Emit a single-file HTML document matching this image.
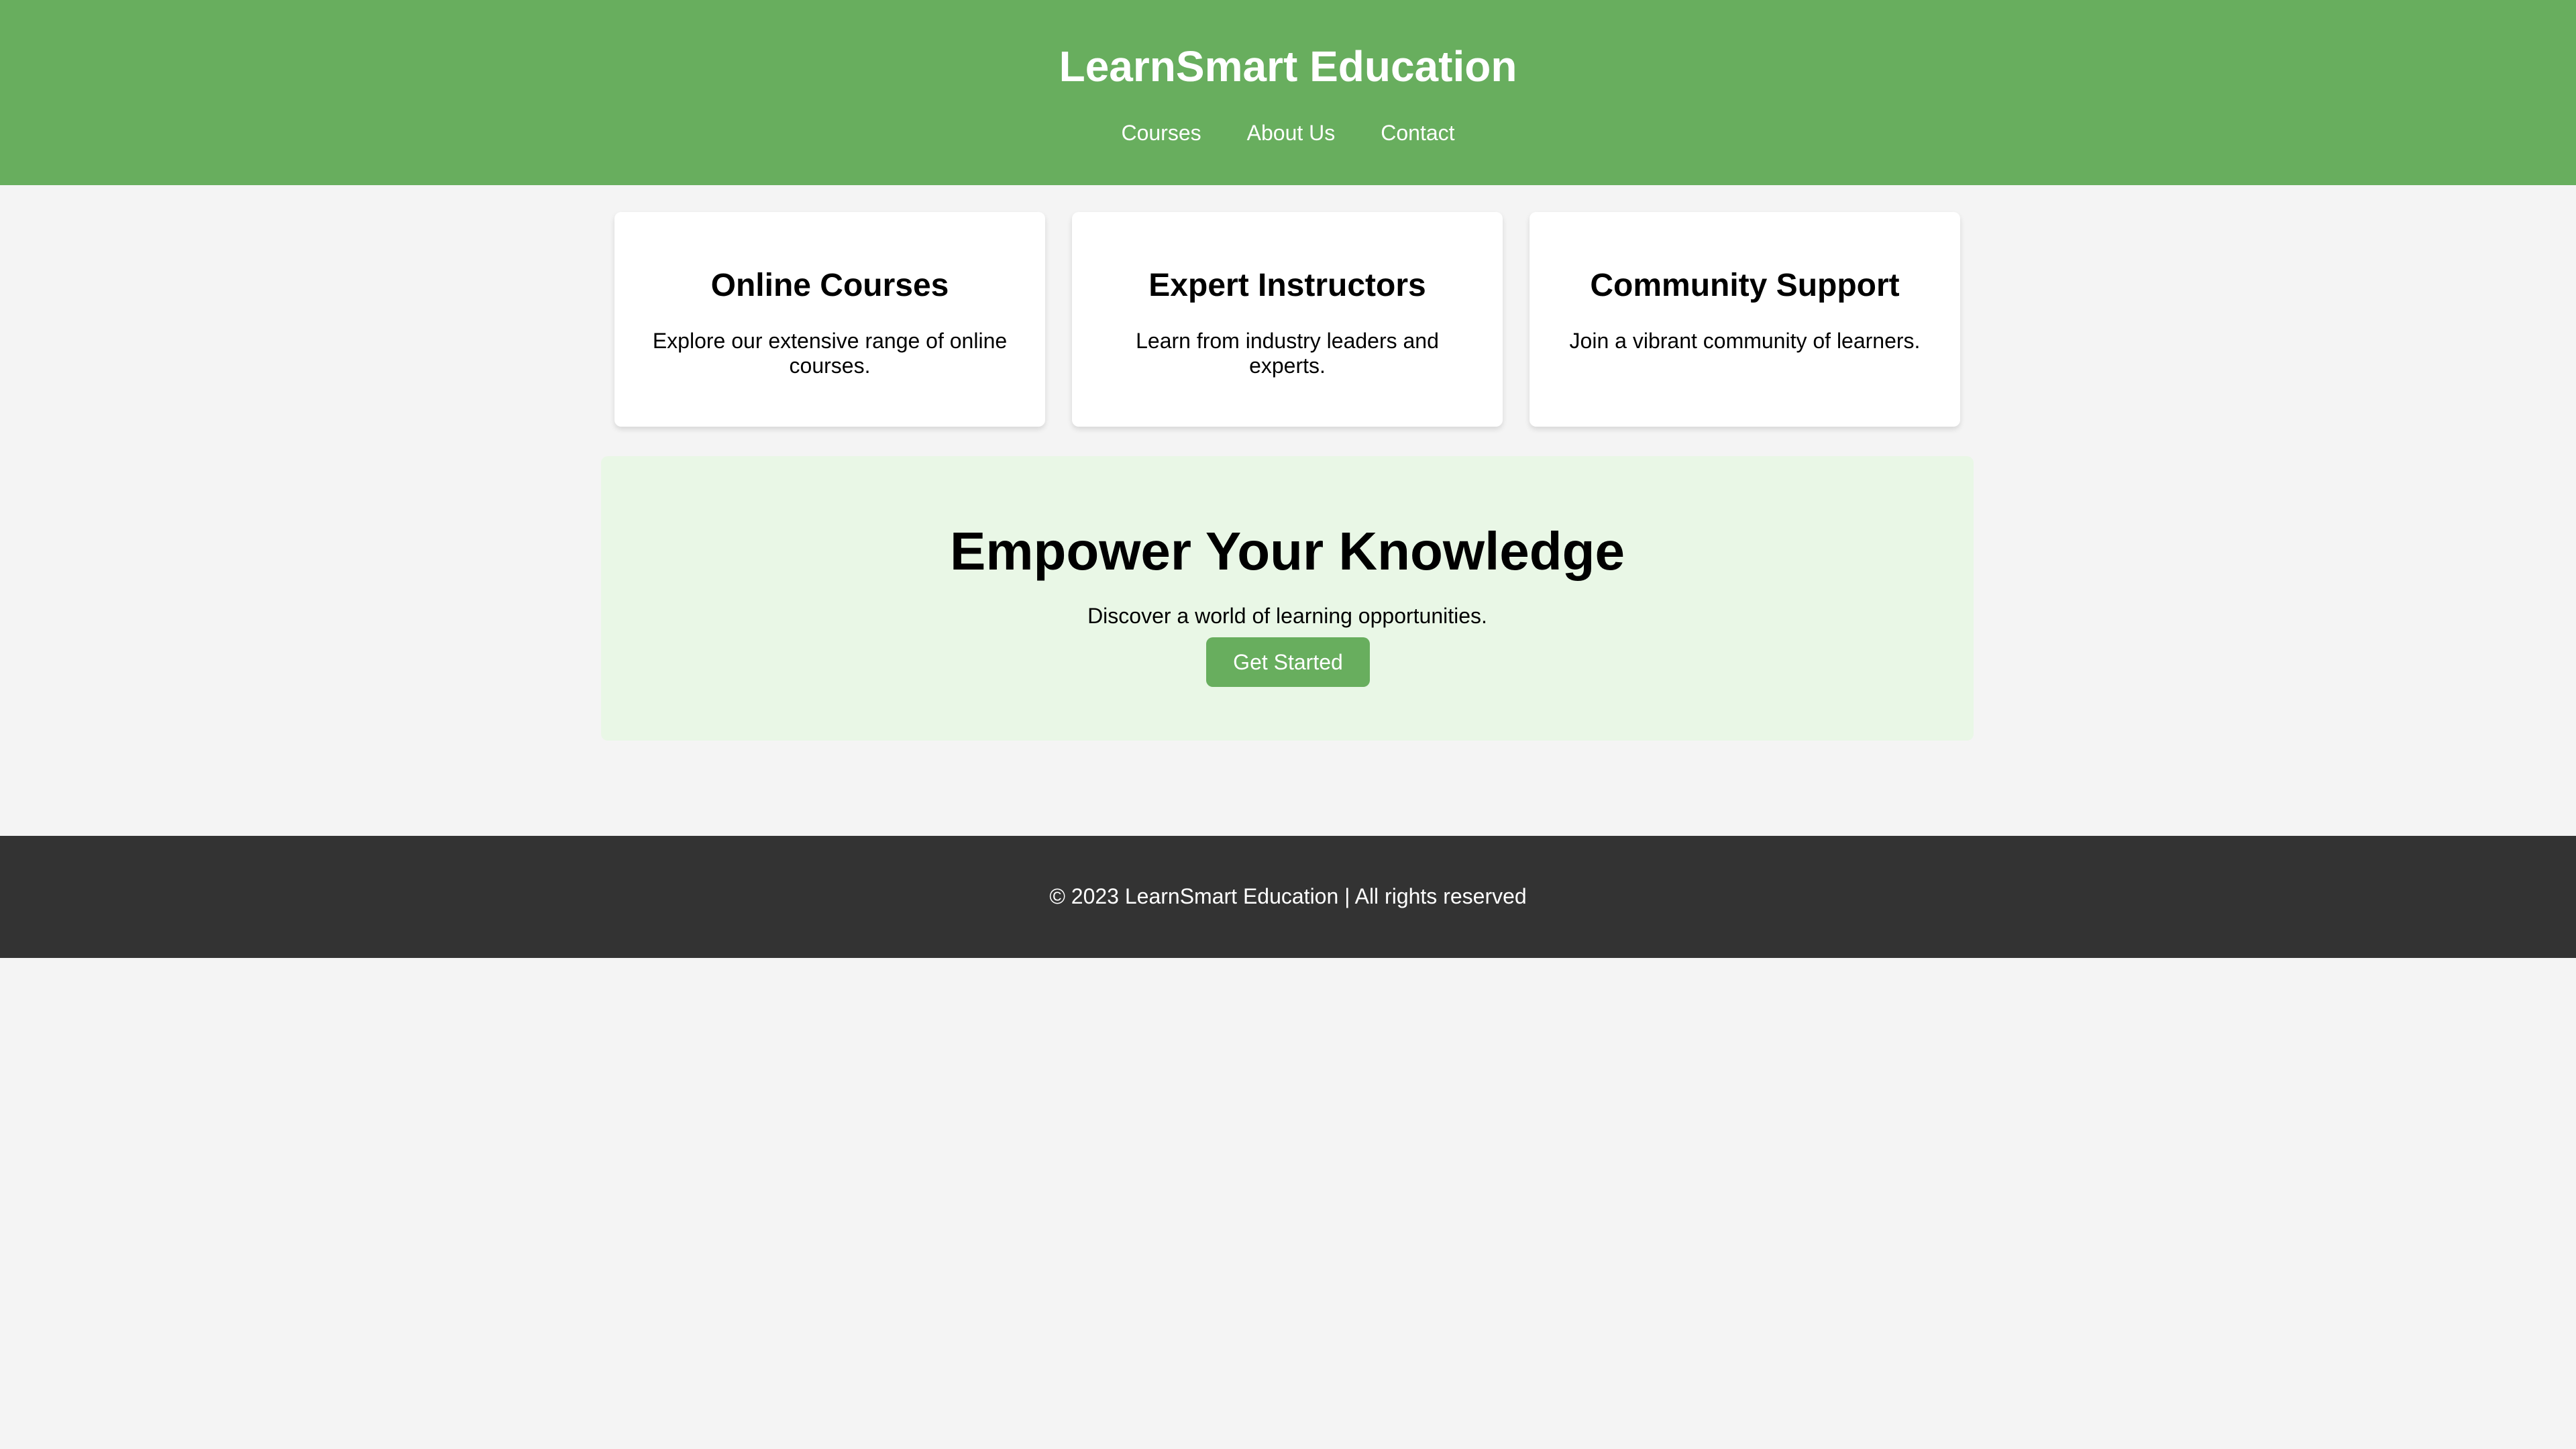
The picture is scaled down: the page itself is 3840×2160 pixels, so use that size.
<!DOCTYPE html>
<html><head><meta charset="utf-8"><style>
html{zoom:2}
body{margin:0;background:#f4f4f4;font-family:"Liberation Sans",Arial,sans-serif;width:1920px;height:1080px;position:relative;overflow:hidden}
header{position:absolute;left:0;top:0;width:1920px;height:138px;background:#68ae5e;color:#fff;text-align:center}
header h1{position:absolute;left:0;right:0;top:31px;margin:0;font-size:32px;line-height:37px}
nav{position:absolute;left:0;right:0;top:90px;display:flex;justify-content:center;gap:34px;font-size:16px;line-height:18px}
.card{position:absolute;top:158px;width:321px;height:160px;background:#fff;border-radius:5px;box-shadow:0 2px 4px rgba(0,0,0,.12);text-align:center;box-sizing:border-box;padding:0 20px}
.card h2{margin:0;position:absolute;left:0;right:0;top:41px;font-size:24px;line-height:28px}
.card p{position:absolute;left:20px;right:20px;top:87px;margin:0;font-size:16px;line-height:18.5px}
.hero{position:absolute;left:448px;top:340px;width:1023px;height:212px;background:#e9f7e6;border-radius:5px;text-align:center}
.hero h2{position:absolute;left:0;right:0;top:48px;margin:0;font-size:40px;line-height:46px}
.hero p{position:absolute;left:0;right:0;top:110px;margin:0;font-size:16px;line-height:18px}
.btn{position:absolute;left:451px;top:135px;width:122px;height:37px;background:#68ae5e;color:#fff;border-radius:5px;font-size:16px;line-height:37px}
footer{position:absolute;left:0;top:623px;width:1920px;height:91px;background:#333;color:#fff;text-align:center;font-size:16px;line-height:18px}
footer span{position:absolute;left:0;right:0;top:36px}
</style></head><body>
<header><h1>LearnSmart Education</h1><nav><span>Courses</span><span>About Us</span><span>Contact</span></nav></header>
<div class="card" style="left:458px"><h2>Online Courses</h2><p>Explore our extensive range of online courses.</p></div>
<div class="card" style="left:799px"><h2>Expert Instructors</h2><p>Learn from industry leaders and experts.</p></div>
<div class="card" style="left:1140px"><h2>Community Support</h2><p>Join a vibrant community of learners.</p></div>
<div class="hero"><h2>Empower Your Knowledge</h2><p>Discover a world of learning opportunities.</p><div class="btn">Get Started</div></div>
<footer><span>© 2023 LearnSmart Education | All rights reserved</span></footer>
</body></html>
